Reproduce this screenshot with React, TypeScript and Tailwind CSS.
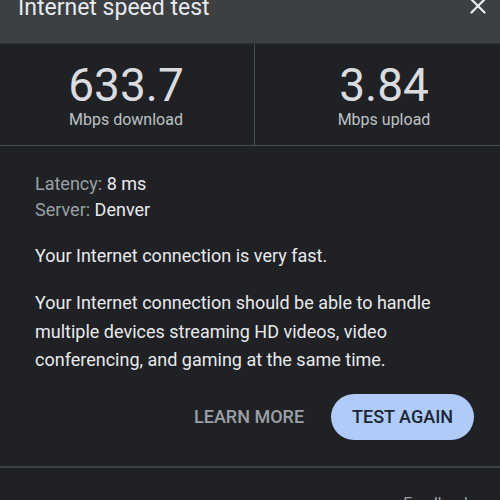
import { X } from 'lucide-react'

const font = { fontFamily: 'Roboto, "Noto Sans", Arial, sans-serif' }

function Stat({ value, label, className }: { value: string; label: string; className?: string }) {
  return (
    <div className={`flex flex-col items-center justify-center ${className ?? ''}`}>
      <div className="text-[46px] leading-[50px] text-[#dadce0]">{value}</div>
      <div className="text-[16px] leading-[19px] text-[#bdc1c6]">{label}</div>
    </div>
  )
}

export default function App() {
  return (
    <div className="w-[500px] h-[500px] overflow-hidden bg-[#202124]" style={font}>
      <div className="-mt-[20px]">
        {/* header */}
        <div className="flex h-[64px] items-center justify-between bg-[#3c4043] pl-[18px] pr-[9px] pb-[8px] border-b border-[#2e3134]">
          <h1 className="text-[23px] leading-none text-[#e8eaed]">Internet speed test</h1>
          <X className="h-[26px] w-[26px] text-[#e8eaed] -mt-[4px]" strokeWidth={2.1} />
        </div>

        {/* results */}
        <div className="flex h-[102px] border-b border-[#4a4d51]">
          <Stat value="633.7" label="Mbps download" className="w-[252px]" />
          <div className="ml-[2px] w-px bg-[#4a4d51]" />
          <Stat value="3.84" label="Mbps upload" className="flex-1 pl-[13px]" />
        </div>

        <div className="px-[35px] pt-[25px] text-[18px] text-[#e8eaed]">
          <div className="leading-[26px]">
            <div>
              <span className="text-[#9aa0a6]">Latency: </span>8 ms
            </div>
            <div>
              <span className="text-[#9aa0a6]">Server: </span>Denver
            </div>
          </div>
          <p className="mt-[20px] leading-[26px]">Your Internet connection is very fast.</p>
          <p className="mt-[20px] leading-[28.5px]">
            Your Internet connection should be able to handle multiple devices streaming HD videos, video
            conferencing, and gaming at the same time.
          </p>
        </div>

        <div className="mt-[19px] flex items-center justify-end gap-[27px] pr-[26px]">
          <button className="text-[18px] font-medium uppercase text-[#9aa0a6]">Learn more</button>
          <button className="h-[46px] rounded-full bg-[#aecbfa] px-[21px] text-[18px] font-medium uppercase text-[#1f2633]">
            Test again
          </button>
        </div>

        <div className="mt-[26px] border-t-2 border-[#3c4043]" />
        <div className="flex justify-end pr-[28px] pt-[24px]">
          <span className="text-[16px] text-[#9aa0a6]">Feedback</span>
        </div>
      </div>
    </div>
  )
}
